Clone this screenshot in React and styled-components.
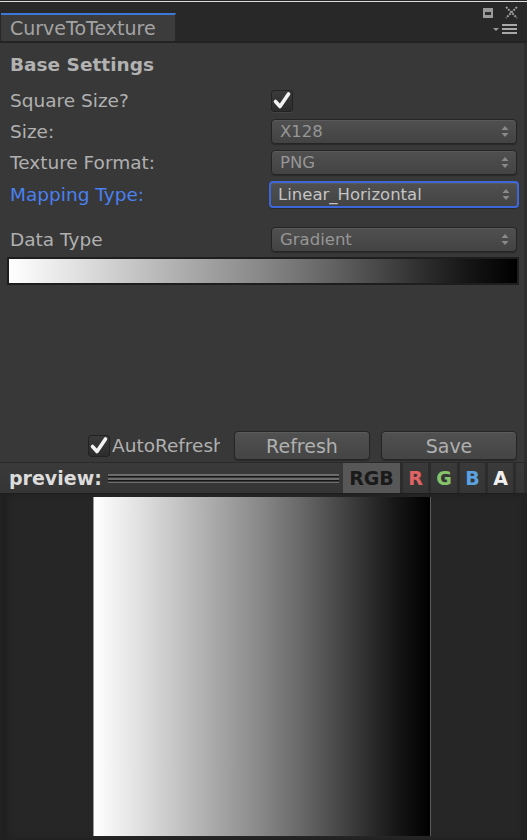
import React from "react";
import styled, { createGlobalStyle } from "styled-components";

const Global = createGlobalStyle`
  html, body {
    margin: 0;
    padding: 0;
    background: #383838;
  }
  body {
    font-family: "DejaVu Sans", "Liberation Sans", sans-serif;
  }
`;

const GRADIENT =
  "linear-gradient(to right, #ffffff 0%, #e4e4e4 12%, #c4c4c4 25%, #a6a6a6 37%, #878787 50%, #676767 62%, #474747 73%, #2c2c2c 82%, #161616 90%, #000000 100%)";

const Window = styled.div`
  width: 527px;
  height: 840px;
  display: flex;
  flex-direction: column;
  background: #383838;
  overflow: hidden;
`;

const TitleBar = styled.div`
  height: 41px;
  flex: none;
  display: flex;
  align-items: flex-end;
  justify-content: space-between;
  background: #282828;
  box-shadow: inset 0 1px #282828, inset 0 2px #dcdcdc;
  border-bottom: 2px solid #232323;
`;

const Tab = styled.div`
  margin-left: 1px;
  width: 175px;
  height: 28px;
  box-sizing: border-box;
  border-top: 2px solid #3d78d8;
  border-right: 1px solid #2a2a2a;
  background: #3c3c3c;
  color: #a4a4a4;
  font-size: 19px;
  line-height: 26px;
  padding-left: 9px;
  white-space: nowrap;
`;

const Tools = styled.div`
  align-self: stretch;
  display: flex;
  flex-direction: column;
  align-items: flex-end;
  gap: 5px;
  padding: 6px 9px 0 0;
`;

const ToolRow = styled.div`
  display: flex;
  align-items: center;
  gap: 12px;
`;

const Panel = styled.div`
  flex: 1;
  display: flex;
  flex-direction: column;
  padding: 10px 7px 0 10px;
  border-right: 3px solid #2e2e2e;
`;

const Heading = styled.div`
  font-weight: bold;
  font-size: 18.5px;
  color: #b2b2b2;
  height: 24px;
  line-height: 24px;
  margin-bottom: 8px;
  white-space: nowrap;
`;

const Row = styled.div`
  display: grid;
  grid-template-columns: 261px 1fr;
  align-items: center;
  height: ${(p) => p.$h || 31}px;
  margin-top: ${(p) => p.$mt || 0}px;
`;

const Label = styled.div`
  font-size: 18.5px;
  color: ${(p) => (p.$active ? "#4a80f0" : "#b0b0b0")};
  white-space: nowrap;
`;

const Check = styled.div`
  width: 20px;
  height: 20px;
  flex: none;
  border-radius: 3px;
  background: linear-gradient(#3a3a3a, #2c2c2c);
  border: 1px solid #222;
  box-shadow: 0 1px 0 #444;
  display: flex;
  align-items: center;
  justify-content: center;
`;

const Select = styled.div`
  box-sizing: border-box;
  border-radius: 4px;
  border: ${(p) => (p.$focus ? "2px solid #3d66d8" : "1px solid #252525")};
  margin: 0 ${(p) => (p.$focus ? "-2px" : "0")};
  height: ${(p) => (p.$focus ? 27 : 25)}px;
  background: linear-gradient(#505050, #434343);
  box-shadow: inset 0 1px 0 #5a5a5a, 0 1px 1px #2a2a2a;
  display: flex;
  align-items: center;
  justify-content: space-between;
  padding: 0 7px 0 ${(p) => (p.$focus ? 7 : 8)}px;
  color: ${(p) => (p.$focus ? "#c4c4c4" : "#969696")};
  font-size: 16.5px;
`;

const GradientBar = styled.div`
  margin: 2px -2px 0 -3px;
  height: 28px;
  box-sizing: border-box;
  border: 2px solid #1e1e1e;
  background: ${GRADIENT};
`;

const Spacer = styled.div`
  flex: 1;
`;

const ActionRow = styled.div`
  display: flex;
  align-items: center;
  height: 31px;
  margin-bottom: 1px;
`;

const AutoBox = styled.div`
  margin-left: 78px;
  width: 132px;
  display: flex;
  align-items: center;
  gap: 2px;
  overflow: hidden;
  white-space: nowrap;
  font-size: 18.5px;
  color: #b0b0b0;
`;

const Button = styled.div`
  width: 136px;
  height: 29px;
  flex: none;
  box-sizing: border-box;
  margin-left: ${(p) => p.$ml}px;
  border-radius: 4px;
  border: 1px solid #252525;
  background: linear-gradient(#515151, #444444);
  box-shadow: inset 0 1px 0 #5c5c5c, 0 1px 1px #2a2a2a;
  color: #b0b0b0;
  font-size: 19px;
  display: flex;
  align-items: center;
  justify-content: center;
`;

const PreviewBar = styled.div`
  flex: none;
  height: 30px;
  display: flex;
  align-items: stretch;
  background: linear-gradient(#3a3a3a, #353535);
  border-top: 1px solid #2a2a2a;
  border-bottom: 1px solid #1e1e1e;
`;

const PreviewLabel = styled.div`
  padding-left: 9px;
  width: 108px;
  box-sizing: border-box;
  flex: none;
  font-size: 19px;
  font-weight: bold;
  color: #dcdcdc;
  display: flex;
  align-items: center;
  white-space: nowrap;
`;

const Grip = styled.div`
  width: 231px;
  flex: none;
  height: 9px;
  align-self: center;
  background: repeating-linear-gradient(
    #6c6c6c 0px,
    #6c6c6c 2px,
    #151515 2px,
    #151515 3px,
    #3a3a3a 3px,
    #3a3a3a 4px
  );
  margin-right: 4px;
`;

const Channel = styled.div`
  width: ${(p) => p.$w}px;
  flex: ${(p) => (p.$w ? "none" : "1")};
  box-sizing: border-box;
  display: flex;
  align-items: center;
  justify-content: center;
  font-weight: bold;
  font-size: 19px;
  color: ${(p) => p.$color};
  background: ${(p) => (p.$on ? "#575757" : "transparent")};
  border-right: 3px solid #2c2c2c;
`;

const PreviewArea = styled.div`
  flex: none;
  height: 346px;
  box-sizing: border-box;
  display: flex;
  padding: 3px 0 4px 90px;
  background: #262626;
  border-left: 3px solid #212121;
  border-right: 6px solid #212121;
  box-shadow: inset 4px 0 6px #1f1f1f;
`;

const Image = styled.div`
  width: 338px;
  height: 339px;
  box-sizing: border-box;
  border-left: 1px solid #9a9a9a;
  border-right: 1px solid #5a5a5a;
  background: ${GRADIENT};
`;

function CheckMark({ size = 20 }) {
  return (
    <svg width={size} height={size} viewBox="0 0 20 20">
      <path
        d="M3.5 10.5 L8 15.5 L16.5 3"
        fill="none"
        stroke="#f2f2f2"
        strokeWidth="3.6"
        strokeLinecap="round"
        strokeLinejoin="round"
      />
    </svg>
  );
}

function Arrows() {
  return (
    <svg width="8" height="13" viewBox="0 0 8 13">
      <path d="M4 1 L7.5 5 L0.5 5 Z" fill="#8a8a8a" />
      <path d="M4 12 L7.5 8 L0.5 8 Z" fill="#8a8a8a" />
    </svg>
  );
}

function MaxIcon() {
  return (
    <svg width="10" height="10" viewBox="0 0 10 10">
      <rect x="0" y="0" width="10" height="10" fill="#9a9a9a" />
      <rect x="2" y="4" width="6" height="3" fill="#2e2e2e" />
    </svg>
  );
}

function CloseIcon() {
  return (
    <svg width="13" height="13" viewBox="0 0 13 13">
      <path
        d="M1 1 L12 12 M12 1 L1 12"
        stroke="#9a9a9a"
        strokeWidth="2"
        strokeDasharray="2 1"
      />
    </svg>
  );
}

function MenuIcon() {
  return (
    <svg width="25" height="11" viewBox="0 0 25 11">
      <path d="M0 4 L6 4 L3 7 Z" fill="#9a9a9a" />
      <rect x="9" y="0" width="15" height="2" fill="#a8a8a8" />
      <rect x="9" y="4" width="15" height="2" fill="#a8a8a8" />
      <rect x="9" y="8" width="15" height="2" fill="#a8a8a8" />
    </svg>
  );
}

const fields = [
  { label: "Size:", value: "X128" },
  { label: "Texture Format:", value: "PNG" },
  { label: "Mapping Type:", value: "Linear_Horizontal", focus: true },
];

const channels = [
  { name: "RGB", color: "#1a1a1a", on: true, w: 60 },
  { name: "R", color: "#e06464", w: 28 },
  { name: "G", color: "#86c46a", w: 29 },
  { name: "B", color: "#5aa2e2", w: 28 },
  { name: "A", color: "#f0f0f0", w: 28 },
];

export default function App() {
  return (
    <Window>
      <Global />
      <TitleBar>
        <Tab>CurveToTexture</Tab>
        <Tools>
          <ToolRow>
            <MaxIcon />
            <CloseIcon />
          </ToolRow>
          <MenuIcon />
        </Tools>
      </TitleBar>

      <Panel>
        <Heading>Base Settings</Heading>
        <Row $h={31}>
          <Label>Square Size?</Label>
          <Check>
            <CheckMark />
          </Check>
        </Row>
        {fields.map((f) => (
          <Row key={f.label} $h={f.focus ? 32 : 31}>
            <Label $active={f.focus}>{f.label}</Label>
            <Select $focus={f.focus}>
              {f.value}
              <Arrows />
            </Select>
          </Row>
        ))}
        <Row $h={31} $mt={14}>
          <Label>Data Type</Label>
          <Select>
            Gradient
            <Arrows />
          </Select>
        </Row>
        <GradientBar />
        <Spacer />
        <ActionRow>
          <AutoBox>
            <Check>
              <CheckMark />
            </Check>
            AutoRefresh
          </AutoBox>
          <Button $ml={14}>Refresh</Button>
          <Button $ml={11}>Save</Button>
        </ActionRow>
      </Panel>

      <PreviewBar>
        <PreviewLabel>preview:</PreviewLabel>
        <Grip />
        {channels.map((c) => (
          <Channel key={c.name} $color={c.color} $on={c.on} $w={c.w}>
            {c.name}
          </Channel>
        ))}
        <Channel $color="#000" />
      </PreviewBar>

      <PreviewArea>
        <Image />
      </PreviewArea>
    </Window>
  );
}
